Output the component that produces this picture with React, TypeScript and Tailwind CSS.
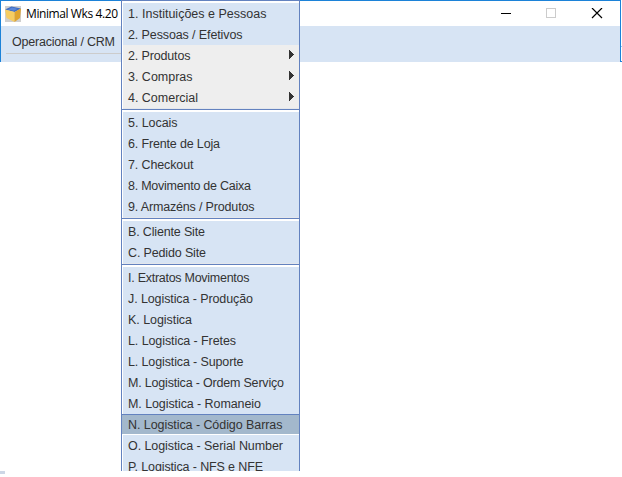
type Entry = { label: string; width: string; kind?: 'sub' | 'active' };

const groups: Entry[][] = [
  [
    { label: '1. Instituições e Pessoas', width: '138.5px' },
    { label: '2. Pessoas / Efetivos', width: '114.5px' },
    { label: '2. Produtos', width: '62.5px', kind: 'sub' },
    { label: '3. Compras', width: '64.5px', kind: 'sub' },
    { label: '4. Comercial', width: '70px', kind: 'sub' },
  ],
  [
    { label: '5. Locais', width: '49.5px' },
    { label: '6. Frente de Loja', width: '92px' },
    { label: '7. Checkout', width: '65.5px' },
    { label: '8. Movimento de Caixa', width: '123px' },
    { label: '9. Armazéns / Produtos', width: '126.5px' },
  ],
  [
    { label: 'B. Cliente Site', width: '77px' },
    { label: 'C. Pedido Site', width: '78px' },
  ],
  [
    { label: 'I. Extratos Movimentos', width: '121.5px' },
    { label: 'J. Logistica - Produção', width: '125px' },
    { label: 'K. Logistica', width: '64px' },
    { label: 'L. Logistica - Fretes', width: '108px' },
    { label: 'L. Logistica - Suporte', width: '115.5px' },
    { label: 'M. Logistica - Ordem Serviço', width: '156px' },
    { label: 'M. Logistica - Romaneio', width: '133px' },
    { label: 'N. Logistica - Código Barras', width: '154.5px', kind: 'active' },
    { label: 'O. Logistica - Serial Number', width: '155px' },
    { label: 'P. Logistica - NFS e NFE', width: '135px' },
  ],
];

/** Single-line text fitted to a given width. */
function FitText({ text, width }: { text: string; width: string }) {
  return (
    <svg className="h-[21px] shrink-0 overflow-visible" style={{ width }}>
      <text x="0" y="15" textLength={width} fill="currentColor">
        {text}
      </text>
    </svg>
  );
}

function Separator() {
  return (
    <div className="h-1 shrink-0 bg-white">
      <div className="h-px bg-[#e4e7ec]" />
      <div className="-ml-px h-px bg-[#6382bf]" />
    </div>
  );
}

function MenuRow({ entry }: { entry: Entry }) {
  const tone =
    entry.kind === 'sub'
      ? 'bg-[#eeeeee] pl-[5px]'
      : entry.kind === 'active'
        ? '-ml-px border-t border-b border-t-[#6382bf] border-b-white bg-[#a3b8cc] pl-[6px]'
        : 'bg-[#d7e4f4] pl-[5px]';
  return (
    <div className={`flex h-[21px] shrink-0 items-center ${tone}`}>
      <FitText text={entry.label} width={entry.width} />
      {entry.kind === 'sub' && (
        <svg className="mr-[5px] mb-[2px] ml-auto h-[9px] w-[5px]" viewBox="0 0 5 9" shapeRendering="crispEdges">
          <path d="M0 0h1v1h1v1h1v1h1v1h1v1h-1v1h-1v1h-1v1h-1v1H0z" fill="#333333" />
        </svg>
      )}
    </div>
  );
}

function Cube() {
  return (
    <svg className="h-4 w-4" viewBox="0 0 16 16">
      <path d="M0 0h16v16H0z" fill="#cfcfcf" />
      <path d="M0 3.5 6.5.5 16 2.5 9.5 6z" fill="#3f6cc0" />
      <path d="M3 3.4 7 1.6l5.5 1.2L9 4.7z" fill="#5a86d8" />
      <path d="M0 3.5 9.5 6v10L1.5 12z" fill="#f6cd62" />
      <path d="M16 2.5 9.5 6v10l5.5-4z" fill="#dfa42f" />
    </svg>
  );
}

export default function App() {
  return (
    <div className="relative h-[477px] w-[622px] overflow-hidden bg-white font-['Liberation_Sans',Arial,sans-serif] text-[12.5px] text-[#333333]">
      <div className="flex h-[62px] w-[621px] flex-col border-t border-r border-l border-[#1c82d8]">
        <header className="flex h-[25px] items-center pl-1">
          <Cube />
          <div className="ml-[5px] font-['Open_Sans','Noto_Sans',sans-serif] text-xs text-black">
            <FitText text="Minimal Wks 4.20" width="92px" />
          </div>
          <svg className="mr-[13px] ml-auto h-[11px] w-[106px]" viewBox="0 0 106 11" shapeRendering="crispEdges" fill="none">
            <path d="M0 5.5h10" stroke="#000" />
            <path d="M45.5.5h9v9h-9z" stroke="#cccccc" />
            <path d="M91 0l10 10M101 0l-10 10" stroke="#000" strokeWidth="1.2" shapeRendering="auto" />
          </svg>
        </header>
        <div className="flex h-9 flex-col bg-[#d7e4f4] pl-[11px]">
          <div className="mt-[5px] h-[22px]">
            <FitText text="Operacional / CRM" width="103px" />
          </div>
          <div className="-ml-[6px] h-px w-[116px] bg-[#cccccc]" />
        </div>
      </div>
      <div className="absolute top-[46px] left-[621px] h-4 w-px border-t border-b border-t-[#9ccaef] border-b-[#1c82d8]" />

      <nav className="absolute top-0 left-[121px] flex h-[471px] w-[179px] flex-col overflow-hidden border-t border-r border-l border-[#6382bf]">
        <div className="h-[2px] shrink-0 bg-white" />
        {groups.map((group, i) => (
          <div key={i} className="flex shrink-0 flex-col border-l border-white">
            {i > 0 && <Separator />}
            {group.map((entry) => (
              <MenuRow key={entry.label} entry={entry} />
            ))}
          </div>
        ))}
      </nav>

      <div className="absolute top-[471px] left-0 h-[3px] w-[5px] bg-[#cdd7e6]" />
    </div>
  );
}
